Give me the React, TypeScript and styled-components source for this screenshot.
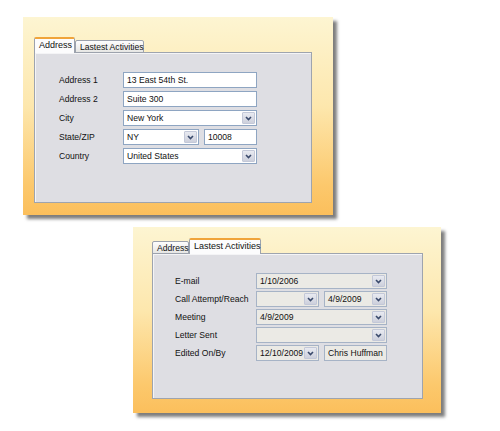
import React from 'react';
import styled, { createGlobalStyle } from 'styled-components';

const GlobalStyle = createGlobalStyle`
html, body {
  margin: 0;
  background: #ffffff;
  font-family: "Liberation Sans", Arial, sans-serif;
}
`;

const Page = styled.div`
box-sizing: border-box;
min-height: 431px;
display: flex;
flex-direction: column;
align-items: flex-start;
gap: 12px;
padding: 17px 0 10px 23px;
`;

const Card = styled.div<{ $w: number; $h: number; $pt: number; $pl: number; $ml?: number }>`
box-sizing: border-box;
flex: none;
width: ${(p) => p.$w}px;
height: ${(p) => p.$h}px;
margin-left: ${(p) => p.$ml || 0}px;
padding: ${(p) => p.$pt}px 0 0 ${(p) => p.$pl}px;
background: linear-gradient(#fdf5d2 0%, #fde7ad 45%, #fcc86c 85%, #fbbf5c 100%);
box-shadow: 4px 4px 3px rgba(40, 40, 40, 0.6);
`;

const TabRow = styled.div`
display: flex;
align-items: flex-end;
position: relative;
z-index: 1;
margin-bottom: -1px;
`;

const Tab = styled.div<{ $active?: boolean; $w: number }>`
box-sizing: border-box;
width: ${(p) => p.$w}px;
height: ${(p) => (p.$active ? 16 : 13)}px;
padding-left: 4px;
font-size: ${(p) => (p.$active ? 9 : 8.6)}px;
line-height: ${(p) => (p.$active ? 13 : 12)}px;
color: #111111;
white-space: nowrap;
border: 1px solid #9ca2ad;
border-bottom: ${(p) => (p.$active ? 'none' : '1px solid #9ca2ad')};
border-top: ${(p) => (p.$active ? '2px solid #f0a43a' : '1px solid #9ca2ad')};
background: ${(p) => (p.$active ? '#fcfcfd' : 'linear-gradient(#fdfdfd, #e6e6e4)')};
border-radius: 2px 2px 0 0;
`;

const Panel = styled.div<{ $w: number; $h: number; $pt: number; $pl: number }>`
box-sizing: border-box;
width: ${(p) => p.$w}px;
height: ${(p) => p.$h}px;
padding: ${(p) => p.$pt}px 0 0 ${(p) => p.$pl}px;
background: #dedee3;
border: 1px solid #9ea4ae;
box-shadow: inset 1px 1px 0 #f4f4f6;
`;

const Form = styled.div<{ $label: number; $field: number; $gap: number }>`
display: grid;
grid-template-columns: ${(p) => p.$label}px ${(p) => p.$field}px;
row-gap: ${(p) => p.$gap}px;
align-items: center;
`;

const Label = styled.div`
font-size: 8.6px;
color: #111111;
white-space: nowrap;
`;

const Pair = styled.div`
display: flex;
gap: 5px;
`;

const Field = styled.div<{ $disabled?: boolean; $w?: number }>`
box-sizing: border-box;
display: flex;
align-items: center;
height: 16px;
width: ${(p) => (p.$w ? `${p.$w}px` : '100%')};
padding: 0 1px 0 3px;
border: 1px solid ${(p) => (p.$disabled ? '#a6b3c6' : '#8ea5c2')};
background: ${(p) => (p.$disabled ? '#ebeae5' : '#ffffff')};
font-size: 8.6px;
color: #111111;
white-space: nowrap;
overflow: hidden;
`;

const FieldText = styled.span`
flex: 1;
`;

const DropButton = styled.div`
box-sizing: border-box;
width: 13px;
height: 12px;
display: flex;
align-items: center;
justify-content: center;
background: linear-gradient(#e8eaf1, #cdd0dc);
border: 1px solid #c3c8d8;
border-radius: 1px;
`;

function Chevron() {
  return (
    <svg width="7" height="5" viewBox="0 0 7 5">
      <polyline points="1,1 3.5,3.5 6,1" fill="none" stroke="#3a4a6c" strokeWidth="1.6" />
    </svg>
  );
}

function Input({ value, w, disabled }: { value?: string; w?: number; disabled?: boolean }) {
  return (
    <Field $w={w} $disabled={disabled}>
      <FieldText>{value}</FieldText>
    </Field>
  );
}

function Select({ value, w, disabled }: { value?: string; w?: number; disabled?: boolean }) {
  return (
    <Field $w={w} $disabled={disabled}>
      <FieldText>{value}</FieldText>
      <DropButton>
        <Chevron />
      </DropButton>
    </Field>
  );
}

function AddressCard() {
  return (
    <Card $w={310} $h={198} $pt={20} $pl={11}>
      <TabRow>
        <Tab $active $w={41}>Address</Tab>
        <Tab $w={69}>Lastest Activities</Tab>
      </TabRow>
      <Panel $w={278} $h={151} $pt={19} $pl={24}>
        <Form $label={64} $field={134} $gap={3}>
          <Label>Address 1</Label>
          <Input value="13 East 54th St." />
          <Label>Address 2</Label>
          <Input value="Suite 300" />
          <Label>City</Label>
          <Select value="New York" />
          <Label>State/ZIP</Label>
          <Pair>
            <Select value="NY" w={76} />
            <Input value="10008" w={53} />
          </Pair>
          <Label>Country</Label>
          <Select value="United States" />
        </Form>
      </Panel>
    </Card>
  );
}

function ActivitiesCard() {
  return (
    <Card $w={308} $h={186} $pt={11} $pl={19} $ml={110}>
      <TabRow>
        <Tab $w={37}>Address</Tab>
        <Tab $active $w={72}>Lastest Activities</Tab>
      </TabRow>
      <Panel $w={271} $h={146} $pt={19} $pl={22}>
        <Form $label={81} $field={131} $gap={2}>
          <Label>E-mail</Label>
          <Select value="1/10/2006" disabled />
          <Label>Call Attempt/Reach</Label>
          <Pair>
            <Select w={63} disabled />
            <Select value="4/9/2009" w={63} disabled />
          </Pair>
          <Label>Meeting</Label>
          <Select value="4/9/2009" disabled />
          <Label>Letter Sent</Label>
          <Select disabled />
          <Label>Edited On/By</Label>
          <Pair>
            <Select value="12/10/2009" w={63} disabled />
            <Input value="Chris Huffman" w={63} disabled />
          </Pair>
        </Form>
      </Panel>
    </Card>
  );
}

export default function App() {
  return (
    <>
      <GlobalStyle />
      <Page>
        <AddressCard />
        <ActivitiesCard />
      </Page>
    </>
  );
}
